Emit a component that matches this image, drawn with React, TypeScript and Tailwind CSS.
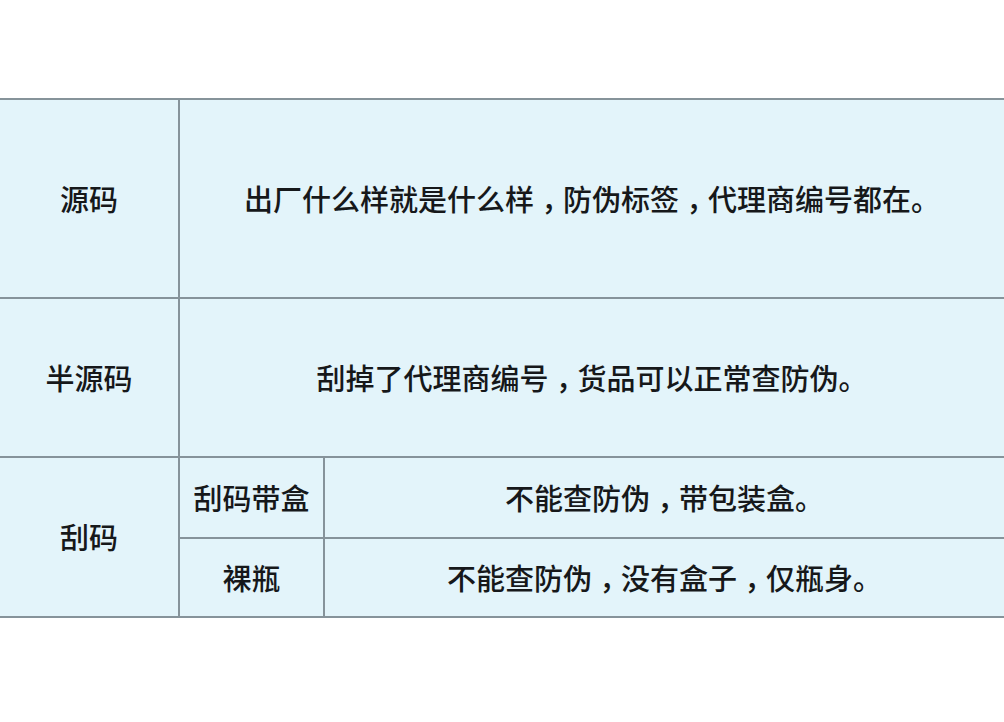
import React from "react";

const cell = "bg-[#e3f4fa] flex items-center justify-center text-[29px] font-medium text-[#16181a]";

function C() {
  return <span className="[font-feature-settings:'halt'] pl-[0.26em] pr-[0.24em]">，</span>;
}

export default function App() {
  return (
    <div
      className="w-[1004px] h-[722px] bg-white pt-[98px]"
      style={{ fontFamily: '"Noto Sans CJK SC", "Noto Sans", sans-serif' }}
    >
      <div className="grid grid-cols-[178px_143px_1fr] grid-rows-[197px_157px_79px_77px] gap-[2px] bg-[#86939a] border-y-2 border-[#86939a]">
        <div className={cell}>源码</div>
        <div className={`${cell} col-span-2`}>
          <span>出厂什么样就是什么样<C />防伪标签<C />代理商编号都在。</span>
        </div>
        <div className={cell}>半源码</div>
        <div className={`${cell} col-span-2`}>
          <span>刮掉了代理商编号<C />货品可以正常查防伪。</span>
        </div>
        <div className={`${cell} row-span-2`}>刮码</div>
        <div className={cell}>刮码带盒</div>
        <div className={cell}>
          <span>不能查防伪<C />带包装盒。</span>
        </div>
        <div className={cell}>裸瓶</div>
        <div className={cell}>
          <span>不能查防伪<C />没有盒子<C />仅瓶身。</span>
        </div>
      </div>
    </div>
  );
}
